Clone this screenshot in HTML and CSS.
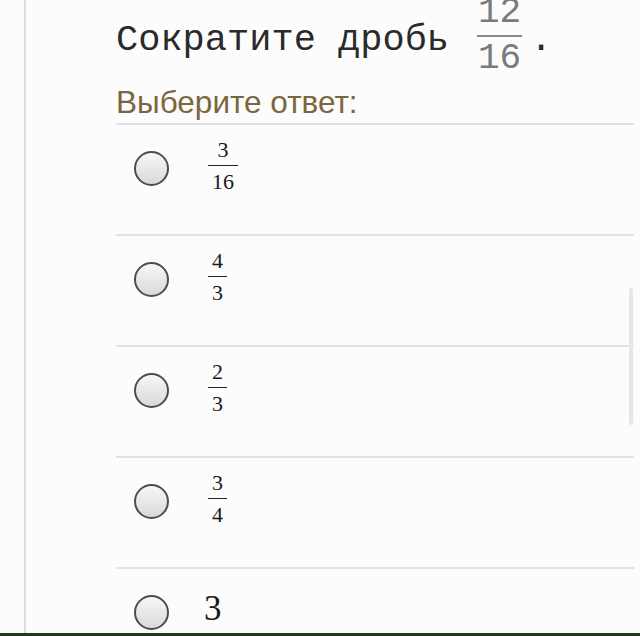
FILE: index.html
```html
<!DOCTYPE html>
<html lang="ru">
<head>
<meta charset="utf-8">
<title>Сократите дробь</title>
<link rel="stylesheet" href="styles.css">
</head>
<body>
<div class="frame">
  <div class="title">
    <span class="title-text">Сократите дробь</span>
    <span class="tfrac"><span class="tnum">12</span><span class="tbar"></span><span class="tden">16</span></span>
    <span class="title-dot">.</span>
  </div>
  <div class="prompt">Выберите ответ:</div>
  <ul class="options">
    <li class="opt"><div class="opt-inner"><span class="radio"></span><span class="frac"><span class="num">3</span><span class="bar"></span><span class="den">16</span></span></div></li>
    <li class="opt"><div class="opt-inner"><span class="radio"></span><span class="frac"><span class="num">4</span><span class="bar"></span><span class="den">3</span></span></div></li>
    <li class="opt"><div class="opt-inner"><span class="radio"></span><span class="frac"><span class="num">2</span><span class="bar"></span><span class="den">3</span></span></div></li>
    <li class="opt"><div class="opt-inner"><span class="radio"></span><span class="frac"><span class="num">3</span><span class="bar"></span><span class="den">4</span></span></div></li>
    <li class="opt"><div class="opt-inner"><span class="radio"></span><span class="whole">3</span></div></li>
  </ul>
</div>
<div class="scrollbar"></div>
<div class="bottom-bar"></div>
</body>
</html>
```
FILE: styles.css
```css
html, body {
  margin: 0;
  padding: 0;
  background: #fcfcfc;
}
body {
  width: 640px;
  height: 636px;
  overflow: hidden;
  position: relative;
}
.frame {
  margin-left: 24px;
  border-left: 2px solid #dcdcdc;
  height: 636px;
  box-sizing: border-box;
  padding-left: 90px;
  padding-right: 6px;
  overflow: hidden;
}
.title {
  display: flex;
  align-items: flex-start;
  margin-top: -5px;
}
.title-text, .title-dot {
  font-family: "Courier New", "Nimbus Mono PS", "Nimbus Mono L", "FreeMono", "Liberation Mono", monospace;
  font-size: 37px;
  line-height: 36px;
  color: #2a2a2a;
  margin-top: 27px;
  white-space: pre;
}
.title-text {
  margin-right: 28px;
}
.title-dot {
  margin-left: 8px;
}
.tfrac {
  display: inline-flex;
  flex-direction: column;
  align-items: center;
  font-family: "Courier New", "Nimbus Mono PS", "Nimbus Mono L", "FreeMono", "Liberation Mono", monospace;
  font-size: 36px;
  line-height: 36px;
  color: #7a7a7a;
}
.tbar {
  display: block;
  width: 45px;
  height: 2px;
  background: #8a8a8a;
  margin-top: 4px;
}
.tden {
  margin-top: 4px;
}
.prompt {
  margin-top: 10px;
  font-family: "Liberation Sans", Arial, sans-serif;
  font-size: 31.5px;
  line-height: 30px;
  color: #7b673c;
}
.options {
  list-style: none;
  margin: 6px 0 0;
  padding: 0;
}
.opt {
  border-top: 2px solid #e2e2e2;
  height: 111px;
  box-sizing: border-box;
  padding-top: 26px;
}
.opt-inner {
  display: flex;
  align-items: center;
  height: 35px;
}
.radio {
  flex: none;
  width: 35px;
  height: 35px;
  box-sizing: border-box;
  border: 2px solid #4d4d4d;
  border-radius: 50%;
  background: linear-gradient(to bottom, #f7f7f7, #d9d9d9);
  margin-left: 18px;
}
.frac {
  display: inline-flex;
  flex-direction: column;
  align-items: center;
  margin-left: 39px;
  margin-bottom: 5px;
  font-family: "Liberation Serif", "Times New Roman", serif;
  font-size: 22px;
  line-height: 22px;
  color: #1a1a1a;
}
.bar {
  display: block;
  align-self: stretch;
  height: 1.5px;
  background: #222;
  margin-top: 4px;
}
.num, .den {
  padding: 0 4px;
}
.den {
  margin-top: 5px;
}
.whole {
  margin-left: 35px;
  margin-bottom: 8px;
  font-family: "Liberation Serif", "Times New Roman", serif;
  font-size: 35px;
  line-height: 36px;
  color: #1a1a1a;
}
.scrollbar {
  position: absolute;
  left: 629px;
  top: 288px;
  width: 4px;
  height: 137px;
  border-radius: 2px;
  background: #e6e6e6;
}
.bottom-bar {
  position: absolute;
  left: 0;
  right: 0;
  bottom: 0;
  height: 3px;
  background: #1f3a1f;
}
```
